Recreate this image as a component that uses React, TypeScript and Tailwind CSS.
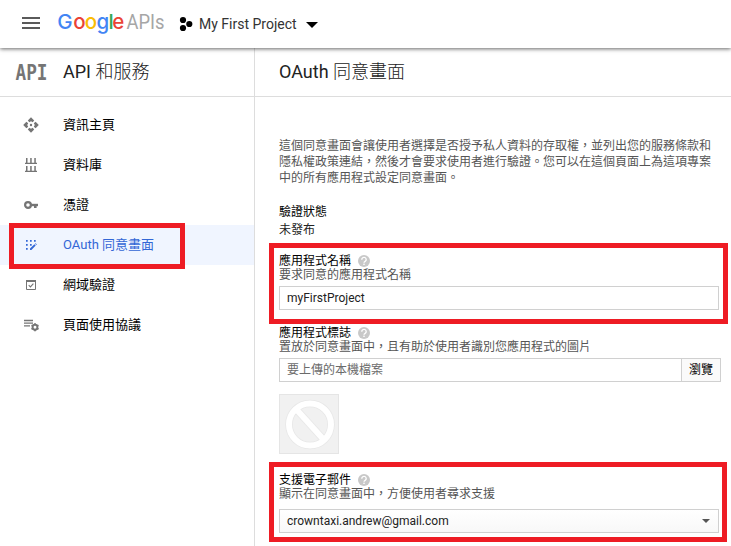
import React from 'react';

const FONT = "font-['Roboto','Noto_Sans_CJK_TC',sans-serif]";

function Help() {
  return (
    <svg className="ml-[7px] size-3" viewBox="0 0 24 24">
      <circle cx="12" cy="12" r="12" fill="#c8c8c8" />
      <path d="M7.600 9.400a4.400 4.400 0 1 1 7 3.200c-1.600 1-2.600 1.500-2.600 3" fill="none" stroke="#fff" strokeWidth="2.600" />
      <rect x="10.600" y="17.200" width="2.800" height="2.800" fill="#fff" />
    </svg>
  );
}

function ApiIcon() {
  return (
    <svg className="size-4" viewBox="0 0 16 16" fill="#757575">
      <path d="M8 .2l3.200 3.200L9.700 5.200 8 4.200l-1.700 1L4.800 3.400zM8 15.800l-3.200-3.200 1.500-1.800 1.700 1 1.700-1 1.500 1.800zM.2 8l3.200-3.200 1.800 1.500-1 1.700 1 1.700-1.800 1.500zM15.800 8l-3.200 3.200-1.800-1.500 1-1.700-1-1.700 1.800-1.500z" />
      <circle cx="8" cy="8" r="1.200" />
    </svg>
  );
}

function LibraryIcon() {
  return (
    <svg className="size-4" viewBox="0 0 16 16" fill="#757575">
      <path d="M3 1h1.500v5H3zM7.200 1h1.500v5H7.200zM11.300 1h1.500v5h-1.500zM2 5.700h12V7H2zM3 9h1.500v5H3zM7.200 9h1.500v5H7.200zM11.300 9h1.500v5h-1.500zM2 13.700h12V15H2z" />
    </svg>
  );
}

function KeyIcon() {
  return (
    <svg className="size-4" viewBox="0 0 16 16" fill="none" stroke="#757575">
      <circle cx="5" cy="8" r="2.900" strokeWidth="2.200" />
      <path d="M8 8h7" strokeWidth="2.400" />
      <path d="M12.300 8v3" strokeWidth="2.600" />
    </svg>
  );
}

function ConsentIcon() {
  return (
    <svg className="size-4" viewBox="0 0 16 16" fill="#3367d6">
      <path d="M3 3h1.700v1.700H3zM7 3h1.700v1.700H7zM11 3h1.700v1.700H11zM3 7h1.700v1.700H3zM7 7h1.700v1.700H7zM3 11h1.700v1.700H3zM7 11.600l4.400-4.300 1.300 1.300L8.400 13H7zM12 6.800l.6-.6 1.300 1.300-.6.6z" />
    </svg>
  );
}

function DomainIcon() {
  return (
    <svg className="size-4" viewBox="0 0 16 16" fill="none" stroke="#757575">
      <path d="M3.500 4v8.500h9V4" />
      <path d="M3 4h10" strokeWidth="2" />
      <path d="M5.700 8.200l1.700 1.700 3-3.200" strokeWidth="1.100" />
    </svg>
  );
}

function AgreementIcon() {
  return (
    <svg className="size-4" viewBox="0 0 16 16" fill="none" stroke="#757575">
      <path d="M1 3.500h9M1 6.100h9M1 8.800h6" strokeWidth="1.300" />
      <circle cx="12" cy="10.200" r="2.400" strokeWidth="1.900" />
      <path d="M12 6.200v1.500M12 12.700v1.500M8.500 8.200l1.400.8M14.100 11.400l1.400.8M8.500 12.200l1.400-.8M14.100 9l1.400-.8" strokeWidth="1.800" />
    </svg>
  );
}

const items = [
  { label: '資訊主頁', icon: <ApiIcon /> },
  { label: '資料庫', icon: <LibraryIcon /> },
  { label: '憑證', icon: <KeyIcon /> },
  { label: 'OAuth 同意畫面', icon: <ConsentIcon />, active: true },
  { label: '網域驗證', icon: <DomainIcon /> },
  { label: '頁面使用協議', icon: <AgreementIcon /> },
];

function Field({ label, hint, children }: { label: string; hint: string; children: React.ReactNode }) {
  return (
    <section>
      <div className="flex h-[14px] items-center leading-[14px] text-black">
        <span>{label}</span>
        <Help />
      </div>
      <p className="mb-1 h-[14px] leading-[14px] text-[#555]">{hint}</p>
      {children}
    </section>
  );
}

export default function App() {
  return (
    <div className={`flex h-[546px] w-[731px] flex-col overflow-hidden bg-white ${FONT}`}>
      <header className="relative z-10 flex h-12 shrink-0 items-center bg-white shadow-[0_1px_4px_rgba(0,0,0,0.6)]">
        <div className="ml-[22px] mb-0.5 flex h-3 w-[18px] flex-col justify-between">
          <i className="h-0.5 bg-[#5a5a5a]" />
          <i className="h-0.5 bg-[#5a5a5a]" />
          <i className="h-0.5 bg-[#5a5a5a]" />
        </div>
        <svg className="ml-[17px] h-12 w-[110px]" viewBox="57 0 110 48">
          <text x="57.300 73.300 84.800 96.400 108.500 112.200" y="29.300" fontFamily="Inter" fontSize="20.500" fontWeight="500">
            <tspan fill="#4285f4">G</tspan><tspan fill="#ea4335">o</tspan><tspan fill="#fbbc05">o</tspan><tspan fill="#4285f4">g</tspan><tspan fill="#34a853">l</tspan><tspan fill="#ea4335">e</tspan>
          </text>
          <text x="126.500" y="29" fontFamily="Roboto" fontSize="19.500" fontWeight="400" fill="#a6a6a6" textLength="38" lengthAdjust="spacingAndGlyphs">APIs</text>
        </svg>
        <svg className="ml-3 h-4 w-[14px]" viewBox="0 0 14 16">
          <circle cx="4" cy="4" r="3.100" />
          <circle cx="4" cy="12" r="3.100" />
          <circle cx="10.300" cy="8" r="3.100" />
        </svg>
        <span className="ml-1.5 w-[98px] whitespace-nowrap text-[14px] text-[#333]">My First Project</span>
        <svg className="ml-[9px] mt-0.5 h-1.5 w-3" viewBox="0 0 12 6"><path d="M0 0h12L6 6z" /></svg>
      </header>

      <div className="flex min-h-0 flex-1">
        <aside className="w-[255px] shrink-0 border-r border-[#ddd]">
          <div className="flex h-[49px] items-center border-b border-[#ddd]">
            <svg className="ml-[15px] h-6 w-9 overflow-visible" viewBox="0 0 36 24">
              <text x="0.500" y="20" fontFamily="DejaVu Sans Mono" fontWeight="700" fontSize="21.500" fill="#757575" textLength="32" lengthAdjust="spacingAndGlyphs">API</text>
            </svg>
            <h1 className="ml-3 whitespace-nowrap text-[18px] leading-6 text-[#222]">API <span className="font-light">和服務</span></h1>
          </div>
          <nav className="pt-2">
            {items.map((item) => (
              <div key={item.label} className={`relative flex h-10 items-center pl-[23px] text-[13px] ${item.active ? 'bg-[#f0f5ff] text-[#3367d6]' : 'text-black'}`}>
                {item.icon}
                <span className="ml-6 whitespace-nowrap leading-4">{item.label}</span>
                {item.active && <div className="absolute -top-0.5 left-[9px] h-[46px] w-44 border-[5px] border-[#ee1c24]" />}
              </div>
            ))}
          </nav>
        </aside>

        <main className="min-w-0 flex-1 text-[12px]">
          <div className="flex h-[49px] items-center border-b border-[#ddd] pl-6">
            <h2 className="whitespace-nowrap text-[18px] leading-6 text-[#222]">OAuth <span className="font-light">同意畫面</span></h2>
          </div>
          <div className="pl-6 pt-[41px]">
            <div className="whitespace-nowrap leading-4 text-[#555]">
              <p>這個同意畫面會讓使用者選擇是否授予私人資料的存取權，並列出您的服務條款和</p>
              <p>隱私權政策連結，然後才會要求使用者進行驗證。您可以在這個頁面上為這項專案</p>
              <p>中的所有應用程式設定同意畫面。</p>
            </div>
            <div className="mt-[17px] leading-[18px]">
              <div className="text-black">驗證狀態</div>
              <div className="text-[#222]">未發布</div>
            </div>

            <div className="relative mt-[15px] w-[440px]">
              <div className="absolute -left-[10px] -top-[11px] h-[81px] w-[459px] border-[5px] border-[#ee1c24]" />
              <Field label="應用程式名稱" hint="要求同意的應用程式名稱">
                <div className="h-6 border border-[#d0d0d0] pl-[7px] leading-[22px] text-[#222]">myFirstProject</div>
              </Field>
            </div>

            <div className="mt-4 w-[442px]">
              <Field label="應用程式標誌" hint="置放於同意畫面中，且有助於使用者識別您應用程式的圖片">
                <div className="flex h-6 border border-[#d0d0d0] leading-[22px]">
                  <div className="flex-1 pl-[7px] text-[#6b6b6b]">要上傳的本機檔案</div>
                  <div className="w-[39px] border-l border-[#d0d0d0] bg-[#fafafa] text-center text-black">瀏覽</div>
                </div>
              </Field>
            </div>

            <div className="mt-3 size-[60px] border border-[#e5e5e5] bg-[#f1f1f1]">
              <svg viewBox="0 0 58 58" className="size-[58px]" fill="none">
                <g stroke="#e7e7e7" strokeWidth="7.500">
                  <circle cx="30" cy="29.500" r="21" />
                  <path d="M16 14l28 31" />
                </g>
                <g stroke="#fff" strokeWidth="6">
                  <circle cx="30" cy="29.500" r="21" />
                  <path d="M16 14l28 31" />
                </g>
              </svg>
            </div>

            <div className="relative mt-[19px] w-[440px]">
              <div className="absolute -left-[10px] -top-[11px] h-[80px] w-[458px] border-[5px] border-[#ee1c24]" />
              <Field label="支援電子郵件" hint="顯示在同意畫面中，方便使用者尋求支援">
                <div className="mt-[8px] flex h-6 items-center justify-between border border-[#d0d0d0] bg-linear-to-b from-white to-[#f8f8f8] pl-[7px] pr-2 text-[#222]">
                  <span>crowntaxi.andrew@gmail.com</span>
                  <svg className="h-1 w-2" viewBox="0 0 8 4"><path d="M0 0h8L4 4z" fill="#555" /></svg>
                </div>
              </Field>
            </div>
          </div>
        </main>
      </div>
    </div>
  );
}
